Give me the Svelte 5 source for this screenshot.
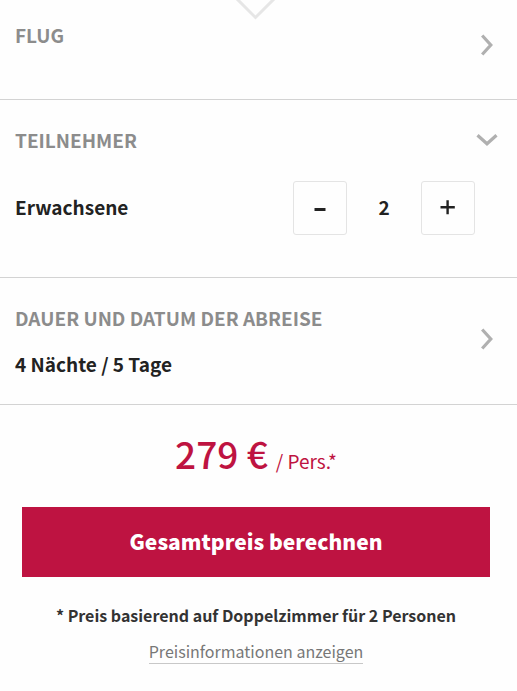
<script>
    let adults = $state(2);
    let participantsOpen = $state(true);

    const changeAdults = (step) => {
        adults = Math.max(1, adults + step);
    };
</script>

{#snippet chevron(down)}
    <svg class="chevron" class:down width="22" height="22" viewBox="0 0 22 22" aria-hidden="true">
        <path d="M6.2 1.5L14.8 11L6.2 20.5" fill="none" stroke="currentColor" stroke-width="3.2" />
    </svg>
{/snippet}

<main>
    <svg class="pointer" width="42" height="20" viewBox="0 0 42 20" aria-hidden="true">
        <path d="M-1-4L20.5 17.5L42-4" fill="none" stroke="#e6e6e6" stroke-width="3" />
    </svg>

    <section class="flight">
        <button class="row">
            <span class="title">FLUG</span>
            {@render chevron(false)}
        </button>
    </section>

    <section class="participants">
        <button
            class="row"
            aria-expanded={participantsOpen}
            onclick={() => (participantsOpen = !participantsOpen)}
        >
            <span class="title">TEILNEHMER</span>
            {@render chevron(participantsOpen)}
        </button>
        {#if participantsOpen}
            <div class="counter">
                <span class="label" id="adults-label">Erwachsene</span>
                <div class="stepper" role="group" aria-labelledby="adults-label">
                    <button aria-label="Weniger" onclick={() => changeAdults(-1)}>
                        <svg width="16" height="16" viewBox="0 0 16 16">
                            <path d="M2.5 9.5H13.5" stroke="currentColor" stroke-width="3" />
                        </svg>
                    </button>
                    <output>{adults}</output>
                    <button aria-label="Mehr" onclick={() => changeAdults(1)}>
                        <svg width="16" height="16" viewBox="0 0 16 16">
                            <path d="M0.5 7.2H14.8M7.6 0.2V14.2" stroke="currentColor" stroke-width="2.4" />
                        </svg>
                    </button>
                </div>
            </div>
        {/if}
    </section>

    <section class="duration">
        <button class="row">
            <span class="texts">
                <span class="title">DAUER UND DATUM DER ABREISE</span>
                <span class="label">4 Nächte / 5 Tage</span>
            </span>
            {@render chevron(false)}
        </button>
    </section>

    <footer>
        <p class="price"><strong>279 €</strong> <span>/ Pers.*</span></p>
        <button class="submit">Gesamtpreis berechnen</button>
        <p class="note">* Preis basierend auf Doppelzimmer für 2 Personen</p>
        <a href="#preisinformationen">Preisinformationen anzeigen</a>
    </footer>
</main>

<style>
    :global(body) {
        margin: 0;
        background-color: #fefefe;
    }

    main {
        position: relative;
        font-family: "Noto Sans CJK SC", "Noto Sans", sans-serif;
        font-size: 19px;
        line-height: 24px;
        color: #222;
    }

    button {
        margin: 0;
        padding: 0;
        border: none;
        background: none;
        font: inherit;
        color: inherit;
        cursor: pointer;
    }

    .pointer {
        position: absolute;
        top: 0;
        left: calc(50% - 24px);
    }

    section {
        padding: 0 19px 0 15px;
        border-bottom: 1px solid #d3d3d3;
    }
    section.flight {
        padding-top: 23px;
        padding-bottom: 42px;
    }
    section.participants {
        padding-top: 28px;
        padding-bottom: 42px;
    }
    section.duration {
        padding-top: 28px;
        padding-bottom: 28px;
    }

    .row {
        width: 100%;
        display: flex;
        justify-content: space-between;
        align-items: center;
        text-align: left;
    }
    .flight .row {
        min-height: 34px;
        align-items: stretch;
    }
    .flight .chevron {
        align-self: center;
        margin-top: 10px;
    }
    .duration .chevron {
        margin-bottom: 4px;
    }
    .texts {
        display: flex;
        flex-direction: column;
        gap: 22px;
    }
    .title {
        font-weight: bold;
        color: #8c8c8c;
    }
    .label {
        font-weight: bold;
    }

    .chevron {
        color: #b0b0b0;
        flex: none;
    }
    .chevron.down {
        transform: rotate(90deg);
    }

    .counter {
        display: flex;
        justify-content: space-between;
        align-items: center;
        padding: 29px 23px 0 0;
    }
    .counter .label,
    .stepper output {
        padding-bottom: 2px;
    }
    .stepper {
        display: flex;
        align-items: center;
    }
    .stepper button {
        box-sizing: border-box;
        width: 54px;
        height: 54px;
        display: flex;
        justify-content: center;
        align-items: center;
        border: 1px solid #e4e4e4;
        border-radius: 3px;
    }
    .stepper output {
        width: 74px;
        text-align: center;
        font-weight: bold;
    }

    footer {
        padding: 26px 27px 24px 22px;
        display: flex;
        flex-direction: column;
        align-items: center;
    }
    footer p {
        margin: 0;
    }
    .price {
        display: flex;
        align-items: baseline;
        gap: 8px;
        color: #be1341;
    }
    .price strong {
        font-size: 37px;
        font-weight: 500;
        line-height: 44px;
    }
    .submit {
        width: 100%;
        height: 70px;
        margin: 32px 0 26px;
        padding-bottom: 2px;
        background-color: #be1341;
        font-size: 21px;
        font-weight: 900;
        color: #fff;
    }
    .note {
        font-size: 16px;
        font-weight: bold;
        color: #333;
    }
    footer a {
        margin-top: 12px;
        border-bottom: 1px solid #c8c8c8;
        font-size: 16px;
        text-decoration: none;
        color: #777;
    }
</style>
